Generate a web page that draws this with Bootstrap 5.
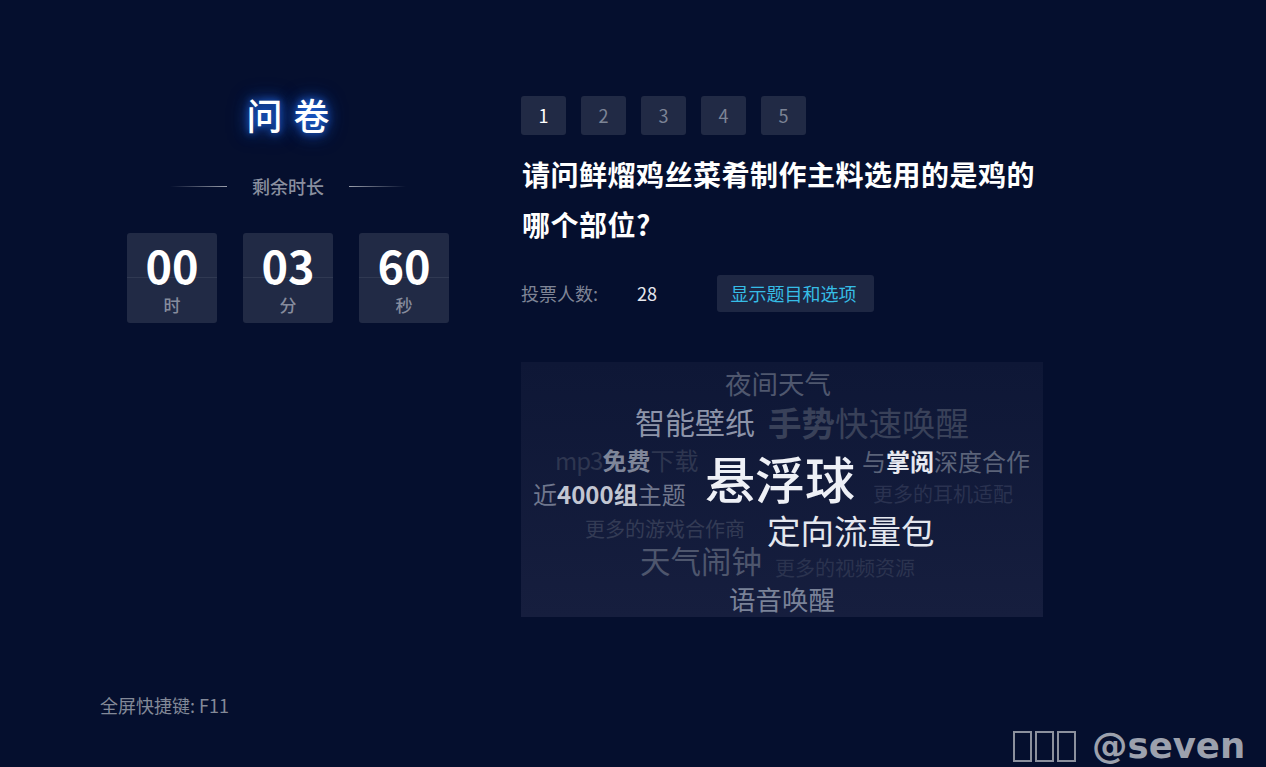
<!DOCTYPE html>
<html lang="zh">
<head>
<meta charset="utf-8">
<title>问卷</title>
<link rel="stylesheet" href="https://cdn.jsdelivr.net/npm/bootstrap@5.3.0/dist/css/bootstrap.min.css">
<style>
html,body{height:100%;margin:0}
body{background:#050f2e;color:#fff;font-family:"Noto Sans CJK SC","Noto Sans",sans-serif;overflow:hidden}
.stage{height:767px;padding:96px 0 0 100px}
.left-pane{width:376px;padding-left:27px;padding-right:27px}
.right-pane{width:522px;margin-left:45px}
.survey-title{font-size:36px;line-height:40px;height:40px;margin-top:-2px;letter-spacing:11px;text-indent:11px;font-weight:500;color:#fff;text-shadow:0 0 7px #1d62d8,0 0 14px #1a55c4,0 0 20px #123f9c}
.remain{font-size:18px;line-height:26px;color:#8a8f9f;margin-top:39px;gap:25px;font-weight:500}
.remain-line{width:57px;height:1px;display:block}
.remain-line.to-r{background:linear-gradient(90deg,rgba(255,255,255,0),rgba(255,255,255,.6))}
.remain-line.to-l{background:linear-gradient(90deg,rgba(255,255,255,.6),rgba(255,255,255,0))}
.clock{margin-top:34px;gap:26px}
.clock-cell{position:relative;width:90px;height:90px;background:#212a45;border-radius:3px;text-align:center}
.clock-cell::after{content:"";position:absolute;left:0;right:0;top:44px;height:1px;background:rgba(255,255,255,.07)}
.clock-num{font-size:45px;line-height:44px;padding-top:10px;font-weight:700;color:#fff}
.clock-unit{font-size:17px;line-height:20px;margin-top:8px;color:#868c9d;font-weight:500}
.pager{gap:15px}
.pager-item{width:45px;height:39px;border-radius:3px;background:#212a45;color:#7c8496;font-size:18px;line-height:39px;text-align:center;padding:0;border:0}
.pager-item.on{color:#fff}
.question{font-size:28px;line-height:50px;font-weight:700;letter-spacing:.5px;margin:14px 0 0;padding-left:1px;color:#fff}
.vote{margin-top:26px;height:37px;font-size:18px}
.vote-label{width:116px;color:#7f8596}
.vote-num{width:80px;color:#e6e8ee}
.show-btn{width:157px;height:37px;border:0;border-radius:3px;padding:0 4px 0 0;background:#1e2743;color:#36bde6;font-size:18px;line-height:37px}
.cloud{position:relative;height:255px;margin-top:50px;background:linear-gradient(180deg,#0e1736,#161e3e)}
.word{position:absolute;white-space:nowrap;line-height:1;transform:translateY(-50%)}
.word b{font-weight:700}
.word i{font-style:normal}
.foot-tip{position:absolute;left:100px;top:692px;font-size:18px;line-height:26px;color:#838998}
.watermark{position:absolute;left:1013px;top:725px;font-family:"DejaVu Sans",sans-serif;font-weight:700;font-size:35.5px;line-height:42px;color:#9ca1ad}
.tofu{display:block;width:19px;height:31px;border:2px solid #8b909d}
.tofu-row{gap:3px;margin-right:16px}
.w1{left:204px;top:21px;font-size:26.5px;color:#4f576e}
.w2{left:114px;top:59px;font-size:30px;color:#8d94a9}
.w3{left:247px;top:60px;font-size:33.5px;color:#394159}
.w4{left:34px;top:98px;font-size:24px;color:#7f8699}
.w4 .s1{color:#2e3650}
.w4 .s1:first-child{letter-spacing:-1px}
.w5{left:184px;top:115px;font-size:50px;color:#eef0f6;font-weight:500}
.w6{left:341px;top:99px;font-size:24px;color:#e6e8ef}
.w6 .s2{color:#5b6379}
.w7{left:12px;top:132px;font-size:24px;color:#c2c6d2}
.w7 .s3{color:#70778d}
.w8{left:352px;top:132px;font-size:20px;color:#2a3250}
.w9{left:64px;top:167px;font-size:20px;color:#333b55}
.w10{left:246px;top:168px;font-size:33.5px;color:#e4e7ef}
.w11{left:119px;top:198px;font-size:30.5px;color:#4e566d}
.w12{left:254px;top:206px;font-size:20px;color:#2b334f}
.w13{left:208px;top:237px;font-size:26.5px;color:#7a8298}
</style>
</head>
<body>
<div class="stage d-flex align-items-start">
  <div class="left-pane flex-shrink-0">
    <div class="survey-title text-center">问卷</div>
    <div class="remain d-flex justify-content-center align-items-center">
      <span class="remain-line to-r"></span><span>剩余时长</span><span class="remain-line to-l"></span>
    </div>
    <div class="clock d-flex">
      <div class="clock-cell"><div class="clock-num">00</div><div class="clock-unit">时</div></div>
      <div class="clock-cell"><div class="clock-num">03</div><div class="clock-unit">分</div></div>
      <div class="clock-cell"><div class="clock-num">60</div><div class="clock-unit">秒</div></div>
    </div>
  </div>
  <div class="right-pane flex-shrink-0">
    <div class="pager d-flex">
      <button class="btn pager-item on">1</button>
      <button class="btn pager-item">2</button>
      <button class="btn pager-item">3</button>
      <button class="btn pager-item">4</button>
      <button class="btn pager-item">5</button>
    </div>
    <h1 class="question">请问鲜熘鸡丝菜肴制作主料选用的是鸡的<br>哪个部位?</h1>
    <div class="vote d-flex align-items-center">
      <span class="vote-label">投票人数:</span>
      <span class="vote-num">28</span>
      <button class="btn show-btn">显示题目和选项</button>
    </div>
    <div class="cloud">
      <span class="word w1">夜间天气</span>
      <span class="word w2">智能壁纸</span>
      <span class="word w3"><b>手势</b>快速唤醒</span>
      <span class="word w4"><i class="s1">mp3</i><b>免费</b><i class="s1">下载</i></span>
      <span class="word w5">悬浮球</span>
      <span class="word w6"><i class="s2">与</i><b>掌阅</b><i class="s2">深度合作</i></span>
      <span class="word w7"><i class="s3">近</i><b>4000组</b><i class="s3">主题</i></span>
      <span class="word w8">更多的耳机适配</span>
      <span class="word w9">更多的游戏合作商</span>
      <span class="word w10">定向流量包</span>
      <span class="word w11">天气闹钟</span>
      <span class="word w12">更多的视频资源</span>
      <span class="word w13">语音唤醒</span>
    </div>
  </div>
</div>
<div class="foot-tip">全屏快捷键: F11</div>
<div class="watermark d-flex align-items-center">
  <span class="tofu-row d-flex"><span class="tofu"></span><span class="tofu"></span><span class="tofu"></span></span><span>@seven</span>
</div>
</body>
</html>
